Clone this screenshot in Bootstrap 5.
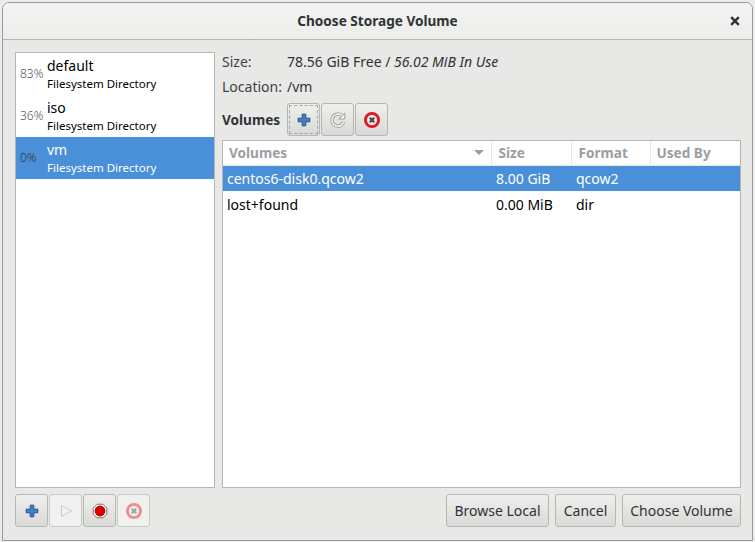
<!DOCTYPE html>
<html lang="en"><head><meta charset="utf-8"><title>Choose Storage Volume</title>
<link rel="stylesheet" href="https://cdn.jsdelivr.net/npm/bootstrap@5.3.0/dist/css/bootstrap.min.css">
<style>
html,body{margin:0;height:542px;overflow:hidden;background:#ececec}
body{padding:2px 2px 1px 2px;font-family:"Noto Sans","Open Sans",sans-serif;font-size:14px;color:#2e3436}
.dlg{height:539px;border:1px solid #9a9a98;border-radius:7px 7px 0 0;background:#e8e8e7;overflow:hidden}
.dlg-head{height:37px;background:linear-gradient(#f3f3f2,#ededec);border-bottom:1px solid #b6b6b3;font-weight:700;font-size:13.6px}
.dlg-x{right:11px;top:12px;width:12px;height:12px}
.dlg-body{padding:12px 11px 0 12px;height:448px;gap:7px}
.pool-list{width:200px;height:436px;border:1px solid #b6b6b3;background:#fff}
.pool-row{height:42px;padding:0 0 0 4px;color:#000}
.pool-row.on{background:#4a90d9;color:#fff}
.pool-pct{width:27px;font-size:12px;color:#555;font-weight:300}
.pool-row.on .pool-pct{color:#2e3436}
.pool-name{font-size:14px;line-height:18px;margin-top:4px}
.pool-sub{font-size:11.5px;line-height:16px;margin-top:1px;white-space:nowrap}
.vol-pane{width:519px}
.info-line{color:#2e3436;font-size:14px;line-height:18px}
.info-a{height:26px;padding-top:1px}
.info-b{height:25px}
.info-k{width:65px;color:#3c4244}
.vol-bar{height:33px;margin-bottom:4px;gap:1px}
.vol-lbl{font-weight:700;width:64px;font-size:13.6px;padding-top:1px}
.tbtn{width:33px;height:33px;padding:0;border:1px solid #b6b6b3;border-radius:3px;background:linear-gradient(#efefee,#d9d9d7);display:flex;align-items:center;justify-content:center;--bs-btn-hover-bg:#e4e4e2}
.tbtn.faint{background:#f0f0ef;border-color:#c9c9c7}
.tbtn.focus-dash{outline:1px dashed #a5a5a3;outline-offset:-3px}
.vol-wrap{height:348px;border:1px solid #b6b6b3;background:#fff}
.vol-tab{table-layout:fixed;width:517px;margin:0;font-size:14px;--bs-table-bg:transparent;--bs-table-border-color:transparent}
.vol-tab th,.vol-tab td{padding:0 0 0 5px;border:0;vertical-align:middle;white-space:nowrap;overflow:hidden}
.vol-tab td:first-child{padding-left:4px}
.vol-tab th{height:24px;color:#9a9e9f;font-weight:700;border-right:1px solid #e6e6e4;border-bottom:1px solid #e6e6e4;padding-left:7px;font-size:13.6px}
.vol-tab th:first-child{padding-left:6px}
.vol-tab th:last-child{border-right:0;padding-left:6px}
.vol-tab td{height:26px;color:#000}
.vol-tab tr.on td{background:#4a90d9;color:#fff}
.sort-arr{border-left:5px solid transparent;border-right:5px solid transparent;border-top:5px solid #9a9e9f;margin-right:7px}
.foot{margin:6px 11px 0 12px;height:33px}
.fbtn{height:33px;padding:0;border:1px solid #b6b6b3;border-radius:3px;background:linear-gradient(#efefee,#d9d9d7);color:#2e3436;font-size:14px;line-height:1}
.fgap{gap:6px}
.w-browse{width:103px}.w-cancel{width:61px}.w-choose{width:119px}
.dim-ic{opacity:.45}
</style></head>
<body>
<svg width="0" height="0" class="d-none" aria-hidden="true"><defs>
<symbol id="i-plus" viewBox="0 0 16 16"><path d="M6.2 2.2h3.6v4h4v3.6h-4v4H6.2v-4h-4V6.2h4z" fill="#4a7cc0" stroke="#23508f" stroke-width="1"/></symbol>
<symbol id="i-stop" viewBox="0 0 16 16"><circle cx="8" cy="8" r="6.6" fill="#e8e8e8" stroke="#e2161c" stroke-width="2.8"/><path d="M5.8 5.8l4.4 4.4M10.2 5.8l-4.4 4.4" stroke="#444" stroke-width="2"/></symbol>
</defs></svg>
<div class="dlg d-flex flex-column">
  <div class="dlg-head position-relative d-flex align-items-center justify-content-center">Choose Storage Volume
    <svg class="dlg-x position-absolute" viewBox="0 0 12 12"><path d="M2.2 2.2l7.6 7.6M9.8 2.2l-7.6 7.6" stroke="#2e3436" stroke-width="2.4"/></svg>
  </div>
  <div class="dlg-body d-flex">
    <div class="pool-list">
      <div class="pool-row d-flex"><div class="pool-pct align-self-center">83%</div><div><div class="pool-name">default</div><div class="pool-sub">Filesystem Directory</div></div></div>
      <div class="pool-row d-flex"><div class="pool-pct align-self-center">36%</div><div><div class="pool-name">iso</div><div class="pool-sub">Filesystem Directory</div></div></div>
      <div class="pool-row on d-flex"><div class="pool-pct align-self-center">0%</div><div><div class="pool-name">vm</div><div class="pool-sub">Filesystem Directory</div></div></div>
    </div>
    <div class="vol-pane d-flex flex-column">
      <div class="info-line info-a d-flex"><div class="info-k">Size:</div><div>78.56 GiB Free / <em>56.02 MiB In Use</em></div></div>
      <div class="info-line info-b d-flex"><div class="info-k">Location:</div><div>/vm</div></div>
      <div class="vol-bar d-flex align-items-center">
        <div class="vol-lbl">Volumes</div>
        <button class="btn tbtn focus-dash" type="button" aria-label="New"><svg width="16" height="16"><use href="#i-plus"/></svg></button>
        <button class="btn tbtn" type="button" aria-label="Refresh"><svg width="18" height="18" viewBox="0 0 18 18"><path d="M14.6 11.2A6 6 0 1 1 12.4 4.2" fill="none" stroke="#9b9b99" stroke-width="3.4"/><path d="M14.6 11.2A6 6 0 1 1 12.4 4.2" fill="none" stroke="#f4f4f3" stroke-width="1.6"/><path d="M9.8 8h6V2.2z" fill="#f4f4f3" stroke="#9b9b99"/></svg></button>
        <button class="btn tbtn" type="button" aria-label="Delete"><svg width="16" height="16"><use href="#i-stop"/></svg></button>
      </div>
      <div class="vol-wrap">
        <table class="table vol-tab">
          <colgroup><col style="width:268px"><col style="width:80px"><col style="width:79px"><col></colgroup>
          <thead><tr><th><div class="d-flex align-items-center justify-content-between">Volumes<span class="sort-arr"></span></div></th><th>Size</th><th>Format</th><th>Used By</th></tr></thead>
          <tbody>
            <tr class="on"><td>centos6-disk0.qcow2</td><td>8.00 GiB</td><td>qcow2</td><td></td></tr>
            <tr><td>lost+found</td><td>0.00 MiB</td><td>dir</td><td></td></tr>
          </tbody>
        </table>
      </div>
    </div>
  </div>
  <div class="foot d-flex justify-content-between">
    <div class="d-flex" style="gap:1px">
      <button class="btn tbtn" type="button" aria-label="Add pool"><svg width="16" height="16"><use href="#i-plus"/></svg></button>
      <button class="btn tbtn faint" type="button" aria-label="Start"><svg class="dim-ic" width="16" height="16" viewBox="0 0 16 16"><path d="M3.5 2.5l10 5.5-10 5.5z" fill="#f4f4f4" stroke="#999"/></svg></button>
      <button class="btn tbtn" type="button" aria-label="Stop"><svg width="16" height="16" viewBox="0 0 16 16"><path d="M5 1.2h6L14.8 5v6L11 14.8H5L1.2 11V5z" fill="#fff" stroke="#777" stroke-width="1"/><circle cx="8" cy="8" r="5.4" fill="#d90000"/></svg></button>
      <button class="btn tbtn faint" type="button" aria-label="Delete pool"><svg class="dim-ic" width="16" height="16"><use href="#i-stop"/></svg></button>
    </div>
    <div class="d-flex fgap">
      <button class="btn fbtn w-browse" type="button">Browse Local</button>
      <button class="btn fbtn w-cancel" type="button">Cancel</button>
      <button class="btn fbtn w-choose" type="button">Choose Volume</button>
    </div>
  </div>
</div>
<script src="https://cdn.jsdelivr.net/npm/bootstrap@5.3.0/dist/js/bootstrap.bundle.min.js"></script>
</body></html>
